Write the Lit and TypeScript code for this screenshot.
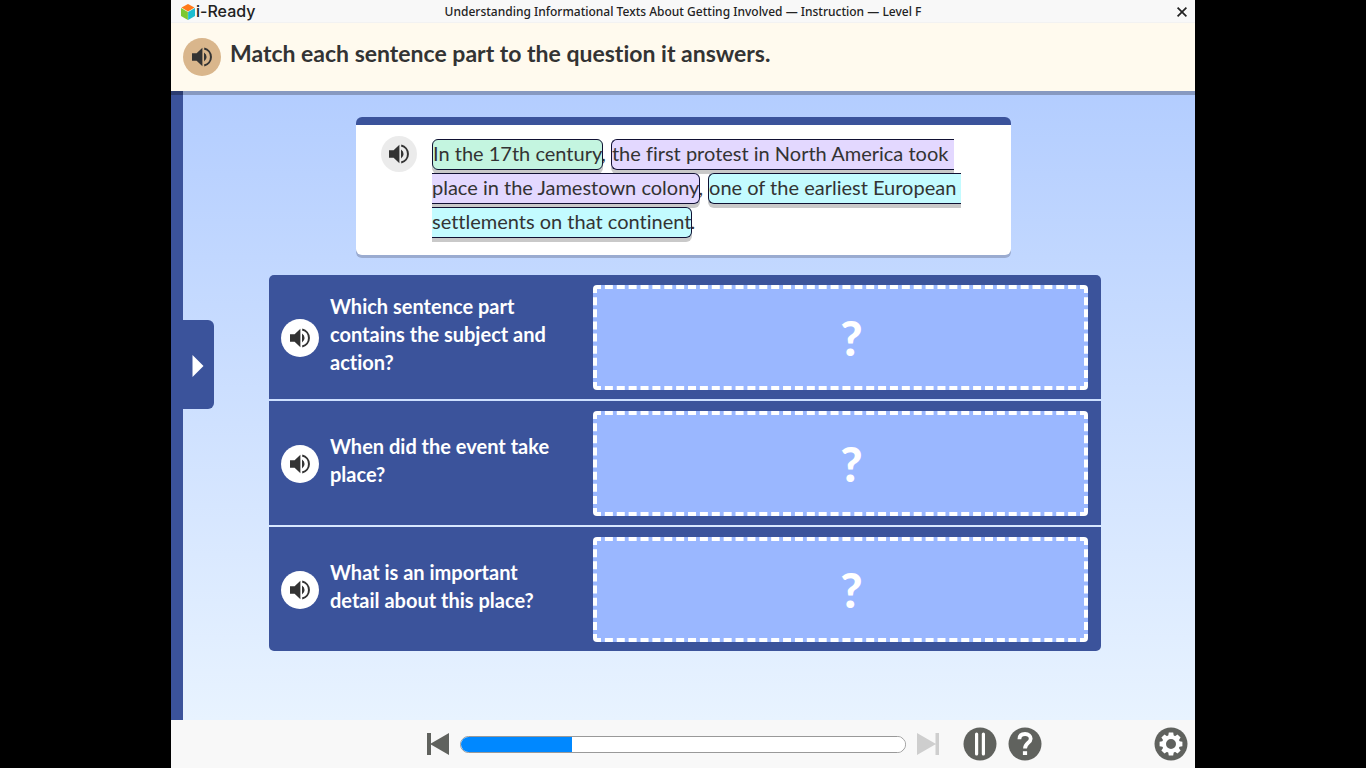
import { LitElement, html, css, svg } from "lit";
import { customElement } from "lit/decorators.js";

const speaker = html`<svg class="speaker" viewBox="0 0 20 20" aria-hidden="true">
  <path d="M0 6.3H4.6L10.4 0.8V19.2L4.6 13.7H0Z" fill="#333" />
  <path d="M12 5.6Q14.6 7.2 14.6 10T12 14.4Z" fill="#333" />
  <path d="M12.2 1.6A8.6 8.6 0 0 1 12.2 18.4" fill="none" stroke="#333" stroke-width="2" />
</svg>`;

const teeth = [0, 45, 90, 135, 180, 225, 270, 315];

@customElement("app-root")
export class AppRoot extends LitElement {
  static styles = css`
    :host {
      display: flex;
      justify-content: center;
      min-height: 100vh;
      background: #000;
      font-family: Lato, "Open Sans", sans-serif;
      font-variant-ligatures: none;
      color: #333;
    }
    * { box-sizing: border-box; }
    button { border: 0; padding: 0; margin: 0; background: none; font: inherit; color: inherit; cursor: pointer; }
    svg { display: block; }
    p, h1, h2 { margin: 0; }
    .stage {
      width: min(100vw, 133.3333vh);
      min-height: 100vh;
      display: flex;
      flex-direction: column;
      background: #f8f8f8;
    }
    .top {
      display: grid;
      grid-template-columns: 1fr auto 1fr;
      align-items: center;
      height: 23px;
      padding: 1px 6px 0;
      border-bottom: 1px solid #f2f2f2;
    }
    .brand { display: flex; align-items: center; gap: 1px; padding-left: 4px; font: 500 16px/21px Inter, sans-serif; color: #222; }
    .cube { width: 14px; height: 16px; }
    .lesson { font: 500 12px/21px "Noto Sans", sans-serif; color: #222; }
    .close { justify-self: end; width: 14px; height: 14px; }
    .prompt {
      display: flex;
      align-items: center;
      gap: 9px;
      height: 68px;
      padding-left: 12px;
      background: #fffaee;
    }
    .prompt h1 { font-size: 23px; line-height: 28px; font-weight: 700; padding-bottom: 8px; }
    .audio {
      flex: none;
      display: grid;
      place-items: center;
      width: 38px;
      height: 38px;
      border-radius: 50%;
      background: #fff;
    }
    .audio.tan { background: #d9b68c; }
    .audio.grey { width: 36px; height: 36px; background: #ebebeb; }
    .speaker { width: 20px; height: 20px; }
    .main {
      flex: 1;
      display: flex;
      background: linear-gradient(#b3cdff, #e8f3ff);
      box-shadow: inset 0 4px #8799c0;
    }
    .rail { position: relative; width: 12px; background: #3b539b; box-shadow: inset 0 4px #2b3c70; }
    .tab {
      position: absolute;
      left: 100%;
      top: calc(50% - 86px);
      width: 31px;
      height: 89px;
      border-radius: 0 6px 6px 0;
      background: #3b539b;
      padding: 3px 0 0 9px;
    }
    .tab svg { width: 12px; height: 22px; }
    .content { flex: 1; padding: 26px 94px 0 86px; }
    .card {
      display: flex;
      gap: 15px;
      margin: 0 90px 20px 87px;
      padding: 11px 25px 17px;
      border-top: 8px solid #3b539b;
      border-radius: 6px;
      background: #fff;
      box-shadow: 0 3px #9aabd0;
    }
    .passage { font-size: 20px; line-height: 34px; white-space: pre; }
    .part {
      padding: 1px 0 4px;
      border: solid #111133;
      border-width: 1px 0;
      box-shadow: 0 4px #c9c9c9;
    }
    .green { background: #c4f5e0; }
    .violet { background: #e3d8ff; }
    .cyan { background: #c3fbff; }
    .starts { border-left-width: 1px; border-top-left-radius: 6px; border-bottom-left-radius: 6px; }
    .ends { margin-right: -2px; border-right-width: 1px; border-top-right-radius: 6px; border-bottom-right-radius: 6px; }
    .rows { display: grid; gap: 2px; border-radius: 5px; overflow: hidden; }
    .row {
      display: grid;
      grid-template-columns: 39fr 62fr;
      align-items: center;
      padding: 10px 13px 9px 12px;
      background: #3b539b;
    }
    .question { display: flex; align-items: center; gap: 11px; padding-right: 32px; }
    .question h2 { color: #fff; font-size: 20px; line-height: 28px; font-weight: 700; padding-bottom: 8px; }
    .drop {
      height: 105px;
      padding-left: 22px;
      border: 4px dashed #fff;
      border-radius: 4px;
      background: #9ab7ff;
      color: #fff;
      font-size: 48px;
      line-height: 1;
      font-weight: 900;
    }
    .foot {
      display: grid;
      grid-template-columns: 1fr auto 1fr;
      column-gap: 24px;
      align-items: center;
      height: 48px;
      padding: 0 7px;
    }
    .transport { grid-column: 2; display: flex; align-items: center; gap: 11px; }
    .skip { width: 22px; height: 22px; }
    .skip svg { width: 22px; height: 22px; }
    .skip:disabled { cursor: default; }
    .progress {
      appearance: none;
      width: 446px;
      height: 17px;
      border: 1px solid #999;
      border-radius: 9px;
      overflow: hidden;
      background: #fff;
    }
    .progress::-webkit-progress-bar { background: #fff; }
    .progress::-webkit-progress-value { background: #0088ff; }
    .tools { display: flex; gap: 11px; }
    .round { width: 34px; height: 34px; }
    .settings { margin-left: auto; }
  `;

  private question(text: string) {
    return html`<section class="row">
      <div class="question">
        <button class="audio" aria-label="Read question aloud">${speaker}</button>
        <h2>${text}</h2>
      </div>
      <button class="drop">?</button>
    </section>`;
  }

  render() {
    return html`<div class="stage">
      <header class="top">
        <div class="brand">
          <svg class="cube" viewBox="0 0 14 16" aria-hidden="true">
            <path d="M7 0L13.5 3.6L7 7.4L0.5 3.6Z" fill="#ff7a1a" />
            <path d="M0 4L6.9 8V16L0 12Z" fill="#7cc832" />
            <path d="M14 4L7.1 8V16L14 12Z" fill="#1cbdd0" />
          </svg>
          <span>i-Ready</span>
        </div>
        <div class="lesson">Understanding Informational Texts About Getting Involved — Instruction — Level F</div>
        <button class="close" aria-label="Close">
          <svg viewBox="0 0 14 14"><path d="M2.6 2.6L11.4 11.4M11.4 2.6L2.6 11.4" stroke="#222" stroke-width="1.7" /></svg>
        </button>
      </header>
      <div class="prompt">
        <button class="audio tan" aria-label="Read directions aloud">${speaker}</button>
        <h1>Match each sentence part to the question it answers.</h1>
      </div>
      <main class="main">
        <div class="rail">
          <button class="tab" aria-label="Open panel">
            <svg viewBox="0 0 12 22"><path d="M0.5 0L11.5 11L0.5 22Z" fill="#fff" /></svg>
          </button>
        </div>
        <div class="content">
          <article class="card">
            <button class="audio grey" aria-label="Read sentence aloud">${speaker}</button>
            <p class="passage"><span class="part green starts ends">In the 17th century</span>, <span class="part violet starts">the first protest in North America took </span><br /><span class="part violet ends">place in the Jamestown colony</span>, <span class="part cyan starts">one of the earliest European </span><br /><span class="part cyan ends">settlements on that continent</span>.</p>
          </article>
          <div class="rows">
            ${this.question("Which sentence part contains the subject and action?")}
            ${this.question("When did the event take place?")}
            ${this.question("What is an important detail about this place?")}
          </div>
        </div>
      </main>
      <footer class="foot">
        <div class="transport">
          <button class="skip" aria-label="Previous">
            <svg viewBox="0 0 22 22"><path d="M0 0H4V22H0ZM22 0V22L3 11Z" fill="#60625e" /></svg>
          </button>
          <progress class="progress" value="25" max="100" aria-label="Lesson progress"></progress>
          <button class="skip" aria-label="Next" disabled>
            <svg viewBox="0 0 22 22"><path d="M22 0H18.5V22H22ZM0 0V22L19 11Z" fill="#cecece" /></svg>
          </button>
        </div>
        <div class="tools">
          <button class="round" aria-label="Pause">
            <svg viewBox="0 0 34 34">
              <circle cx="17" cy="17" r="16.5" fill="#60625e" />
              <path d="M13.6 7V27M20.4 7V27" stroke="#fff" stroke-width="3.2" stroke-linecap="round" />
            </svg>
          </button>
          <button class="round" aria-label="Help">
            <svg viewBox="0 0 34 34">
              <circle cx="17" cy="17" r="16.5" fill="#60625e" />
              <path d="M11.4 12.2C11.4 8.6 13.6 7 17.1 7C20.6 7 22.7 9 22.7 11.7C22.7 15.8 17 15.8 17 21.4" fill="none" stroke="#fff" stroke-width="3.8" />
              <path d="M14.9 24.2H19.1V28H14.9Z" fill="#fff" />
            </svg>
          </button>
          <button class="round settings" aria-label="Settings">
            <svg viewBox="0 0 34 34">
              <circle cx="17" cy="17" r="16.5" fill="#60625e" />
              ${teeth.map((a) => svg`<path d="M14 10L14.8 5.6H19.2L20 10Z" fill="#fff" transform="rotate(${a} 17 17)" />`)}
              <circle cx="17" cy="17" r="7" fill="none" stroke="#fff" stroke-width="4" />
            </svg>
          </button>
        </div>
      </footer>
    </div>`;
  }
}
